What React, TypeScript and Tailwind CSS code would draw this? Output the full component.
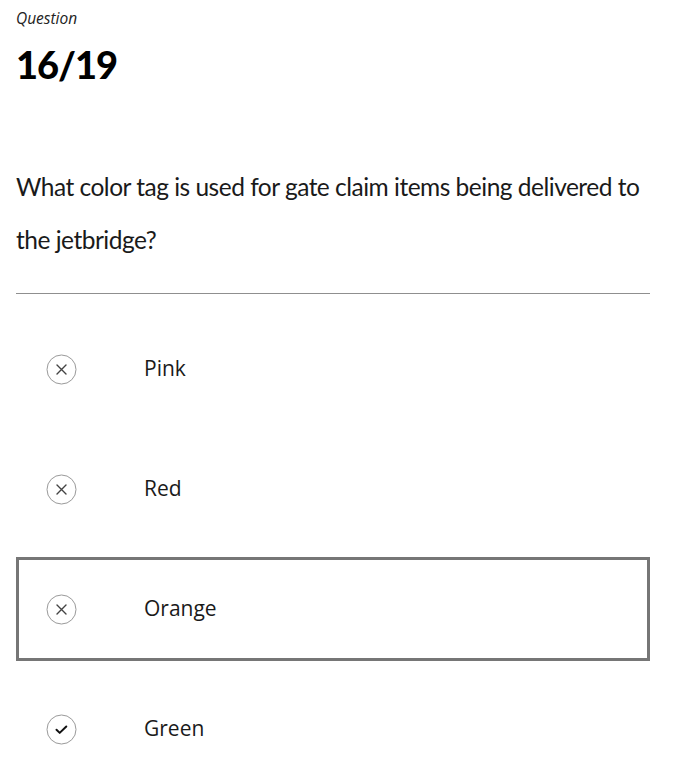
import React from "react"

type Option = {
  label: string
  correct: boolean
  selected?: boolean
}

const options: Option[] = [
  { label: "Pink", correct: false },
  { label: "Red", correct: false },
  { label: "Orange", correct: false, selected: true },
  { label: "Green", correct: true },
]

const StatusIcon = ({ correct }: { correct: boolean }) => (
  <svg width="31" height="31" viewBox="0 0 31 31" fill="none">
    <circle cx="15.5" cy="15.5" r="14.5" stroke="#9a9a9a" strokeWidth="1" />
    {correct ? (
      <path
        d="M10.5 15.8l3.2 3.1 6.6-6.4"
        stroke="#111"
        strokeWidth="2"
        strokeLinecap="round"
        strokeLinejoin="round"
      />
    ) : (
      <path
        d="M11 11l9 9M20 11l-9 9"
        stroke="#444"
        strokeWidth="1.4"
        strokeLinecap="round"
      />
    )}
  </svg>
)

export default function App() {
  return (
    <div className="h-[771px] w-full overflow-hidden bg-white px-4 text-black">
      <div className="w-[634px]">
        <div className="pt-[8px] font-['Open_Sans',sans-serif] text-[15.5px] leading-[20px] italic text-[#222]">
          Question
        </div>
        <div className="mt-[12px] font-['Lato',sans-serif] text-[38px] leading-[48px] font-black tracking-[-1px]">
          16/19
        </div>

        <p className="mt-[72px] font-['Lato',sans-serif] text-[24.5px] leading-[53px] tracking-[-0.5px] text-[#1a1a1a]">
          What color tag is used for gate claim items being delivered to the jetbridge?
        </p>

        <div className="mt-[27px] h-px w-full bg-[#8f8f8f]" />

        <div className="mt-[23px] flex flex-col gap-4">
          {options.map((item) => (
            <div
              key={item.label}
              className={
                item.selected
                  ? "flex h-[104px] items-center border-[3px] border-[#767676] pl-[27px]"
                  : "flex h-[104px] items-center border-[3px] border-transparent pl-[27px]"
              }
            >
              <StatusIcon correct={item.correct} />
              <span className="ml-[67px] font-['Open_Sans',sans-serif] text-[21px] text-[#1a1a1a]">
                {item.label}
              </span>
            </div>
          ))}
        </div>
      </div>
    </div>
  )
}
